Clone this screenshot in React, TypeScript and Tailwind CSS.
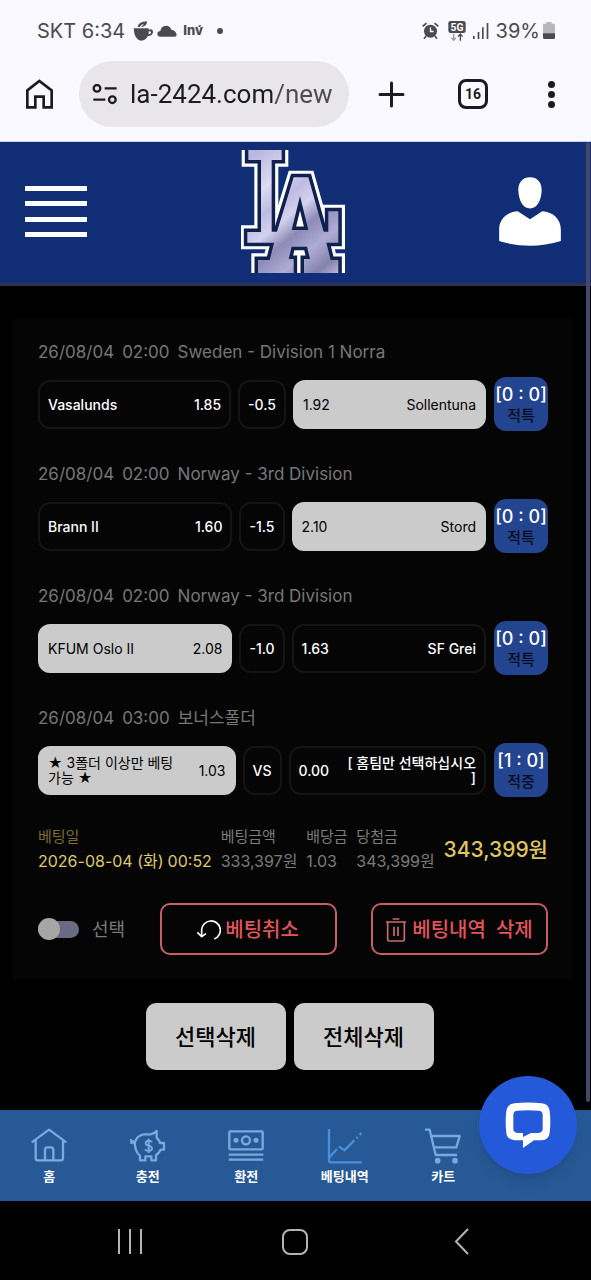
import React from "react"

type Side = { name: string; odds: string; picked?: boolean }

type Match = {
    time: string
    league: string
    home: Side
    line: string
    away: Side
    score: string
    result: string
}

const matches: Match[] = [
    {
        time: "02:00",
        league: "Sweden - Division 1 Norra",
        home: { name: "Vasalunds", odds: "1.85" },
        line: "-0.5",
        away: { name: "Sollentuna", odds: "1.92", picked: true },
        score: "[0 : 0]",
        result: "적특",
    },
    {
        time: "02:00",
        league: "Norway - 3rd Division",
        home: { name: "Brann II", odds: "1.60" },
        line: "-1.5",
        away: { name: "Stord", odds: "2.10", picked: true },
        score: "[0 : 0]",
        result: "적특",
    },
    {
        time: "02:00",
        league: "Norway - 3rd Division",
        home: { name: "KFUM Oslo II", odds: "2.08", picked: true },
        line: "-1.0",
        away: { name: "SF Grei", odds: "1.63" },
        score: "[0 : 0]",
        result: "적특",
    },
    {
        time: "03:00",
        league: "보너스폴더",
        home: { name: "★ 3폴더 이상만 베팅가능 ★", odds: "1.03", picked: true },
        line: "VS",
        away: { name: "[ 홈팀만 선택하십시오 ]", odds: "0.00" },
        score: "[1 : 0]",
        result: "적중",
    },
]

const StatusBar = () => (
    <div className="flex h-[61px] items-center justify-between pl-[37px] pr-9 font-['Inter','Noto_Sans_CJK_KR',sans-serif] text-[20px] text-[#4b4a4f]">
        <div className="flex items-center">
            <span>SKT 6:34</span>
            <svg className="ml-2 h-5 w-5" viewBox="0 0 60 60" fill="currentColor">
                <path d="M2 22H47V26Q60 22 60 34Q59 45 45 45Q37 59 25 59Q4 58 2 22ZM47 31V40Q54 40 54 34Q53 30 47 31Z" fillRule="evenodd" />
                <path d="M14 18Q15 3 42 1Q42 17 24 18Q30 12 33 8Q23 10 20 18Z" />
            </svg>
            <svg className="ml-1 h-3 w-5" viewBox="0 0 60 36" fill="currentColor">
                <path d="M10 35Q1 34 1 26Q2 18 10 18Q12 3 27 2Q39 2 43 14Q56 15 59 29Q59 34 54 35Z" />
            </svg>
            <span className="ml-[6px] text-[13px] font-extrabold">Inv́</span>
            <span className="ml-[14px] h-[6px] w-[6px] rounded-full bg-[#4b4a4f]" />
        </div>
        <div className="flex items-center">
            <svg className="h-[17px] w-[17px]" viewBox="0 0 50 50" fill="none" stroke="currentColor" strokeWidth="4">
                <circle cx="25" cy="27" r="19" fill="currentColor" stroke="none" />
                <path d="M2 13L13 3M48 13L37 3M12 41L6 49M38 41L44 49" strokeWidth="5" />
                <path d="M25 16V28H34" stroke="#fff" />
            </svg>
            <svg className="ml-[9px] h-5 w-[18px]" viewBox="0 0 54 60">
                <rect x="1" width="52" height="36" rx="7" fill="#4b4a4f" />
                <text x="27" y="29" textAnchor="middle" fontSize="31" fontWeight="700" fill="#fff" fontFamily="Roboto, sans-serif">5G</text>
                <path d="M17 38V57M10 50L17 58L24 50" stroke="#9a999e" strokeWidth="4" fill="none" />
                <path d="M37 59V40M30 47L37 39L44 47" stroke="#4b4a4f" strokeWidth="4" fill="none" />
            </svg>
            <svg className="ml-[7px] h-4 w-4" viewBox="0 0 48 48" fill="currentColor">
                <path d="M0 39H5V48H0ZM14 27H19V48H14ZM27 13H32V48H27ZM41 0H46V48H41Z" />
            </svg>
            <span className="ml-[7px]">39%</span>
            <svg className="ml-[3px] h-[17px] w-3" viewBox="0 0 36 51">
                <path d="M10 0H26V5H33Q36 5 36 9V35H0V9Q0 5 3 5H10Z" fill="#b9b7bc" />
                <path d="M0 34H36V47Q36 51 32 51H4Q0 51 0 47Z" fill="#4b4a4f" />
            </svg>
        </div>
    </div>
)

const BrowserBar = () => (
    <div className="flex h-[81px] items-start border-b border-[#c6d3ec] pl-[26px] pr-[34px] text-[#1b1b20]">
        <button aria-label="홈페이지" className="flex h-[66px] items-center">
            <svg className="h-[30px] w-[27px]" viewBox="0 0 81 90" fill="none" stroke="currentColor" strokeWidth="8">
                <path d="M4 34L40 6L77 34V85H53V53H28V85H4Z" />
            </svg>
        </button>
        <div className="ml-[26px] flex h-[66px] min-w-0 flex-1 items-center gap-3 rounded-full bg-[#e8e6ea] pl-[13px] pr-2">
            <svg className="h-[21px] w-[26px] shrink-0" viewBox="0 0 78 63" fill="none" stroke="currentColor" strokeWidth="7">
                <circle cx="15" cy="13" r="10" />
                <path d="M38 13H74M4 47H40" />
                <circle cx="61" cy="47" r="10" />
            </svg>
            <input
                aria-label="주소"
                readOnly
                value="la-2424.com/new"
                className="w-full min-w-0 bg-[linear-gradient(90deg,#1b1b20_142px,#4c4b52_142px)] bg-clip-text font-['Roboto',sans-serif] text-[26px] text-transparent outline-none"
            />
        </div>
        <button aria-label="새 탭" className="ml-[29px] flex h-[66px] items-center">
            <svg className="h-[27px] w-[27px]" viewBox="0 0 27 27" stroke="currentColor" strokeWidth="3" strokeLinecap="round">
                <path d="M13.500 2V25M2 13.500H25" />
            </svg>
        </button>
        <button aria-label="탭 16개" className="ml-[53px] flex h-[66px] items-center">
            <span className="flex h-[30px] w-[30px] items-center justify-center rounded-lg border-[3px] border-[#1b1b20] font-['Roboto',sans-serif] text-[14px] font-bold">16</span>
        </button>
        <button aria-label="메뉴" className="ml-[58px] flex h-[66px] flex-col items-center justify-center gap-[3px] px-[2px]">
            <span className="h-[7px] w-[7px] rounded-full bg-[#1b1b20]" />
            <span className="h-[7px] w-[7px] rounded-full bg-[#1b1b20]" />
            <span className="h-[7px] w-[7px] rounded-full bg-[#1b1b20]" />
        </button>
    </div>
)

const LogoShape = () => (
    <>
        <path d="M738 10H838V60H808V275H978V214H1008V308H735V276H776V60H738Z" />
        <path d="M874 112H918L964 275L985 360H1008V420H905V357H923L914 320H868L859 357H874V420H767V360H802L824 275ZM893 168L868 270H918Z" fillRule="evenodd" />
    </>
)

const Logo = () => (
    <svg className="h-[123px] w-[105px]" viewBox="716 30 315 369" role="img" aria-label="LA">
        <defs>
            <linearGradient id="chrome" gradientUnits="userSpaceOnUse" x1="735" y1="60" x2="1010" y2="400">
                <stop offset="0" stopColor="#b9b7de" />
                <stop offset="0.22" stopColor="#dcdbf3" />
                <stop offset="0.36" stopColor="#bebce2" />
                <stop offset="0.48" stopColor="#d3d2ee" />
                <stop offset="0.6" stopColor="#8d8bb6" />
                <stop offset="0.75" stopColor="#aeacd4" />
                <stop offset="0.9" stopColor="#8583ab" />
                <stop offset="1" stopColor="#b9b7dc" />
            </linearGradient>
        </defs>
        <g fill="#fff" stroke="#fff" strokeWidth="40"><LogoShape /></g>
        <g fill="#10204f" stroke="#10204f" strokeWidth="21"><LogoShape /></g>
        <g fill="url(#chrome)"><LogoShape /></g>
    </svg>
)

const Header = () => (
    <header className="flex h-[144px] items-center justify-between border-b-[3px] border-[#2d3154] bg-[#102d75] pb-[2px] pl-[25px] pr-[30px]">
        <button aria-label="메뉴 열기" className="flex h-[51px] w-[62px] flex-col justify-between">
            <span className="h-[5px] w-full bg-white" />
            <span className="h-[5px] w-full bg-white" />
            <span className="h-[5px] w-full bg-white" />
            <span className="h-[5px] w-full bg-white" />
        </button>
        <a href="#home"><Logo /></a>
        <button aria-label="내 정보">
            <svg className="h-[69px] w-[62px]" viewBox="447 110 186 208" fill="#fff">
                <path d="M540 111C565 111 577 130 575 154C573 184 560 205 540 205C520 205 507 184 505 154C503 130 515 111 540 111Z" />
                <path d="M447 303V268C447 237 470 215 503 213L540 237L577 213C610 215 633 237 633 268V303Q540 332 447 303Z" />
            </svg>
        </button>
    </header>
)

const Team = ({ side, away }: { side: Side; away?: boolean }) => (
    <div
        className={`flex h-[49px] min-w-0 flex-1 items-center justify-between gap-4 rounded-xl border-2 px-2 text-[14px] leading-[15px] ${
            away ? "flex-row-reverse text-right" : ""
        } ${side.picked ? "border-[#cbcbcb] bg-[#cbcbcb] text-black" : "border-[#141414] text-white font-medium"}`}
    >
        <span className="break-all">{side.name}</span>
        <span>{side.odds}</span>
    </div>
)

const MatchRow = ({ match }: { match: Match }) => (
    <li>
        <p className="flex gap-2 text-[17px] leading-6 text-[#777]">
            <span>26/08/04</span>
            <span>{match.time}</span>
            <span>{match.league}</span>
        </p>
        <div className="mt-[13px] flex items-center gap-[7px]">
            <Team side={match.home} />
            <div className="flex h-[49px] items-center rounded-xl border-2 border-[#141414] px-2 text-[14px] font-medium text-white">{match.line}</div>
            <Team side={match.away} away />
            <div className="ml-px flex h-[54px] w-[54px] flex-col items-center justify-center rounded-xl bg-[#23448f] pt-[2px] leading-[21px]">
                <span className="whitespace-nowrap text-[18px] font-medium text-white">{match.score}</span>
                <span className="text-[15px] font-medium text-[#080d20]">{match.result}</span>
            </div>
        </div>
    </li>
)

const Summary = () => (
    <dl className="mt-[27px] flex items-center justify-between whitespace-nowrap text-[16px] leading-[25px] text-[#7b7b7b]">
        <div>
            <dt className="text-[15px] text-[#7d6a2e]">베팅일</dt>
            <dd className="flex gap-1 text-[#dfc96c]"><span>2026-08-04 (화)</span><span>00:52</span></dd>
        </div>
        <div>
            <dt className="text-[15px]">베팅금액</dt>
            <dd>333,397원</dd>
        </div>
        <div>
            <dt className="text-[15px]">배당금</dt>
            <dd>1.03</dd>
        </div>
        <div>
            <dt className="text-[15px]">당첨금</dt>
            <dd>343,399원</dd>
        </div>
        <div>
            <dd className="text-[21px] font-medium text-[#dfc462]">343,399원</dd>
        </div>
    </dl>
)

const Actions = () => (
    <div className="mt-[29px] flex items-center justify-between">
        <label className="flex items-center gap-[13px] text-[18px] text-[#7b7b7b]">
            <input
                type="checkbox"
                className="flex h-[17px] w-[41px] appearance-none items-center rounded-full bg-[#6a6a83] before:h-[22px] before:w-[22px] before:shrink-0 before:rounded-full before:bg-[#a8a5a5] before:content-['']"
            />
            선택
        </label>
        <button className="flex h-[52px] w-[177px] items-center justify-center gap-1 rounded-[10px] border-2 border-[#c55f63] pt-[2px] text-[20px] font-medium text-[#e0555a]">
            <svg className="h-6 w-6" viewBox="0 0 72 66" fill="none" stroke="#fff" strokeWidth="5">
                <path d="M52 60A28 28 0 1 0 14 32V52" />
                <path d="M1 40L14 53L27 44" />
            </svg>
            베팅취소
        </button>
        <button className="flex h-[52px] w-[177px] items-center justify-center gap-[6px] rounded-[10px] border-2 border-[#c55f63] pt-[2px] text-[20px] font-medium text-[#e0555a]">
            <svg className="h-6 w-5" viewBox="0 0 60 72" fill="none" stroke="#c76a6d" strokeWidth="5">
                <path d="M0 12H60M20 3H40M5 12V64Q5 69 10 69H50Q55 69 55 64V12M24 26V54M36 26V54" />
            </svg>
            <span className="flex gap-[10px]"><span>베팅내역</span><span>삭제</span></span>
        </button>
    </div>
)

const tabs = [
    {
        label: "홈",
        icon: <path d="M2 42L54 4L106 42M14 36V90Q14 96 20 96H90Q96 96 96 90V36M42 96V64Q42 57 49 57H60Q67 57 67 64V96" />,
    },
    {
        label: "충전",
        icon: (
            <>
                <path d="M2 32Q2 44 14 44Q20 22 40 18H62Q74 16 80 8V28Q88 36 90 44H102V64H92Q86 76 78 80V96H64V84H46V96H30V82Q16 72 14 44M2 42Q10 46 8 36" />
                <path d="M66 42Q63 37 56 37Q46 38 47 45Q48 51 56 52Q66 54 66 61Q64 68 56 68Q48 68 45 63M56 31V74" strokeWidth="6" />
            </>
        ),
    },
    {
        label: "환전",
        icon: (
            <>
                <rect x="4" y="9" width="100" height="54" rx="3" />
                <circle cx="54" cy="36" r="12" />
                <circle cx="24" cy="36" r="4" fill="currentColor" />
                <circle cx="84" cy="36" r="4" fill="currentColor" />
                <path d="M2 79H106M2 94H106" />
            </>
        ),
    },
    {
        label: "베팅내역",
        active: true,
        icon: <path d="M6 2V96Q6 102 12 102H104M8 86L30 62M36 54L52 66L82 36M88 30L92 26M98 20L103 14" />,
    },
    {
        label: "카트",
        icon: (
            <>
                <path d="M0 4H14L32 80H96M19 23H104L94 57H28" />
                <circle cx="38" cy="97" r="5" fill="currentColor" />
                <circle cx="90" cy="97" r="5" fill="currentColor" />
            </>
        ),
    },
]

const BottomTabs = () => (
    <nav className="relative grid h-[91px] grid-cols-6 bg-[#265996]">
        {tabs.map((tab) => (
            <a key={tab.label} href="#tab" className="flex flex-col items-center pt-[18px] font-['Noto_Sans_CJK_KR',sans-serif] text-[13px] font-bold leading-5 text-white">
                <svg
                    className={`mb-[2px] h-9 w-9 ${tab.active ? "text-[#4a8fdd]" : "text-[#78aade]"}`}
                    viewBox="0 0 108 106"
                    fill="none"
                    stroke="currentColor"
                    strokeWidth="7"
                    strokeLinejoin="round"
                >
                    {tab.icon}
                </svg>
                {tab.label}
            </a>
        ))}
        {/* live chat bubble floats over the last slot */}
        <button aria-label="채팅 상담" className="absolute -top-[34px] right-[14px] flex h-[98px] w-[98px] items-center justify-center rounded-full bg-[#2459d9] shadow-lg">
            <svg className="h-[46px] w-[46px]" viewBox="0 0 138 138">
                <path
                    fill="#fff"
                    fillRule="evenodd"
                    d="M28 4Q69 -1 110 4Q132 6 134 28Q138 60 134 92Q132 113 110 115H87L54 138V115H28Q6 113 4 92Q0 60 4 28Q6 6 28 4ZM37 26Q26 27 25 37V82Q26 92 37 93H54V105L78 93H101Q112 92 113 82V37Q112 27 101 26Q69 23 37 26Z"
                />
            </svg>
        </button>
    </nav>
)

const SystemNav = () => (
    <div className="grid h-[79px] grid-cols-3 items-center justify-items-center bg-black px-[47px] pt-[2px] text-[#b4b4b4]">
        <button aria-label="최근 앱" className="flex w-6 justify-between">
            <span className="h-[25px] w-[2px] bg-[#b4b4b4]" />
            <span className="h-[25px] w-[2px] bg-[#b4b4b4]" />
            <span className="h-[25px] w-[2px] bg-[#b4b4b4]" />
        </button>
        <button aria-label="홈 화면" className="h-[26px] w-[26px] rounded-lg border-2 border-[#b4b4b4]" />
        <button aria-label="뒤로">
            <svg className="h-[27px] w-[15px]" viewBox="0 0 15 27" fill="none" stroke="currentColor" strokeWidth="2">
                <path d="M14 1L2 13.500L14 26" />
            </svg>
        </button>
    </div>
)

const App = () => {
    return (
        <div className="flex min-h-screen flex-col bg-black font-['Inter','Noto_Sans_CJK_KR',sans-serif]">
            <div className="bg-[#faf9ff]">
                <StatusBar />
                <BrowserBar />
            </div>
            <div className="relative flex flex-1 flex-col">
                <Header />
                <main className="flex-1 pb-8 pt-[33px]">
                    <section className="ml-[13px] mr-[19px] bg-[#050505] pb-6 pl-[25px] pr-6 pt-[21px]">
                        <ul className="flex flex-col gap-[31px]">
                            {matches.map((match, i) => (
                                <MatchRow key={i} match={match} />
                            ))}
                        </ul>
                        <Summary />
                        <Actions />
                    </section>
                    <div className="mt-6 flex justify-center gap-2 pr-3">
                        <button className="h-[67px] w-[140px] rounded-[10px] bg-[#cbcbcb] pt-[2px] text-[22px] font-medium text-black">선택삭제</button>
                        <button className="h-[67px] w-[140px] rounded-[10px] bg-[#cbcbcb] pt-[2px] text-[22px] font-medium text-black">전체삭제</button>
                    </div>
                </main>
                {/* scroll indicator */}
                <div className="absolute bottom-2 right-px top-0 w-1 rounded-full bg-[#44466a]" />
            </div>
            <BottomTabs />
            <SystemNav />
        </div>
    )
}

export default App
